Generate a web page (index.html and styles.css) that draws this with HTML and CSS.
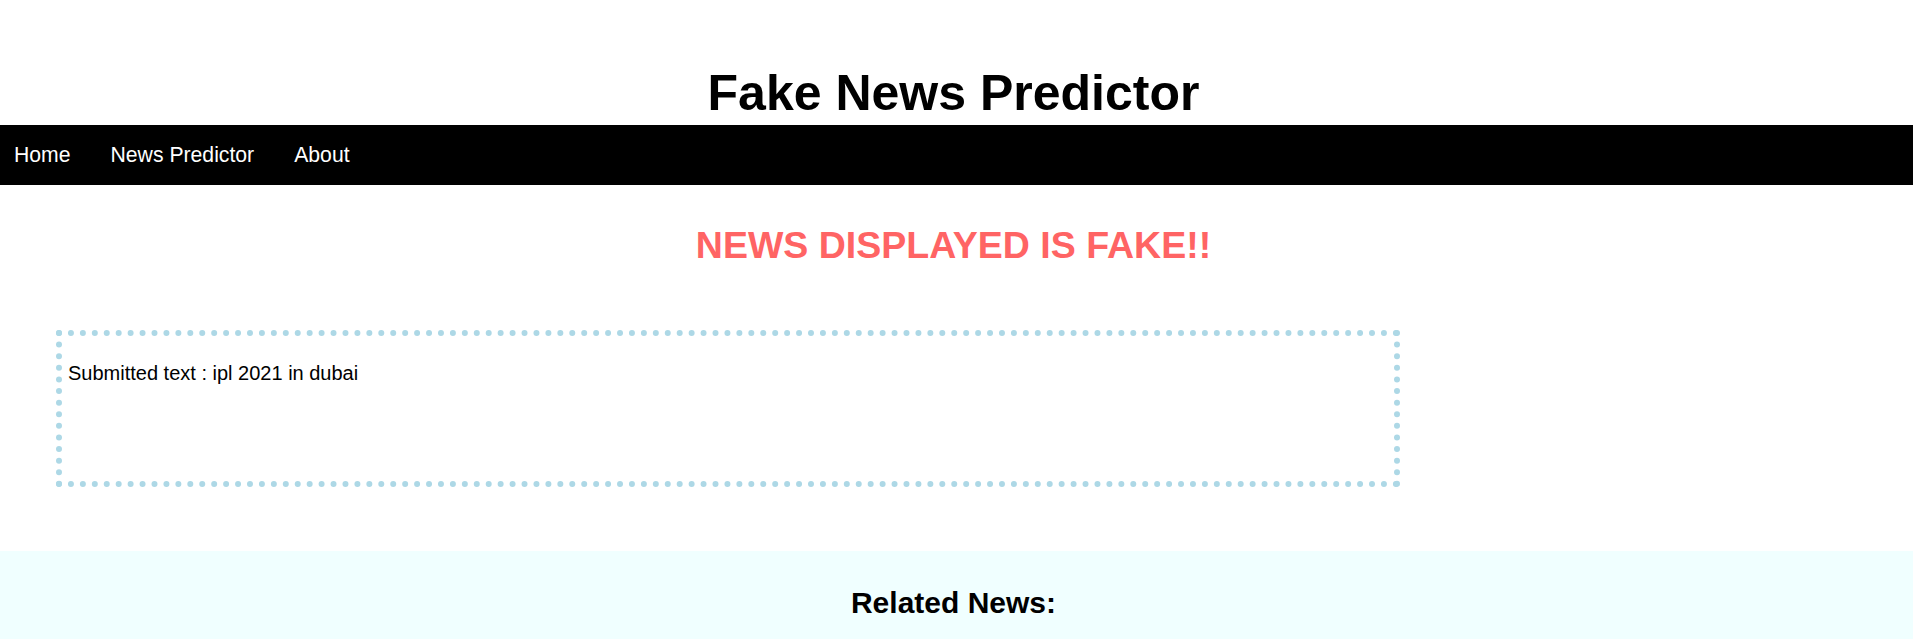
FILE: index.html
```html
<!DOCTYPE html>
<html>
<head>
<meta charset="utf-8">
<title>Fake News Predictor</title>
<link rel="stylesheet" href="styles.css">
</head>
<body>
<h1 class="site-title">Fake News Predictor</h1>
<nav class="topnav">
  <a href="#">Home</a>
  <a href="#">News Predictor</a>
  <a href="#">About</a>
</nav>
<h2 class="verdict">NEWS DISPLAYED IS FAKE!!</h2>
<div class="submitted">
  <p>Submitted text : ipl 2021 in dubai</p>
</div>
<section class="related">
  <h2>Related News:</h2>
</section>
</body>
</html>
```
FILE: styles.css
```css
html, body {
  margin: 0;
  padding: 0;
  background: #ffffff;
  font-family: "Liberation Sans", Arial, sans-serif;
  color: #000;
}

.site-title {
  margin: 64px 0 3px;
  padding-right: 6px;
  font-size: 50px;
  font-weight: bold;
  text-align: center;
  line-height: normal;
}

.topnav {
  height: 60px;
  background: #000;
  display: flex;
  align-items: center;
  gap: 40px;
  padding-left: 14px;
}

.topnav a {
  color: #fff;
  text-decoration: none;
  font-size: 21.2px;
}

.verdict {
  margin: 39px 0 0;
  padding-right: 6px;
  font-size: 37.5px;
  font-weight: bold;
  color: #ff6464;
  text-align: center;
  line-height: normal;
}

.submitted {
  box-sizing: border-box;
  margin: 63px 0 0 56px;
  width: 1344px;
  height: 157px;
  border: 6px dotted #add8e6;
  padding: 6px;
}

.submitted p {
  margin: 20px 0;
  font-size: 20px;
}

.related {
  margin-top: 64px;
  background: #f0ffff;
  padding: 35px 6px 40px 0;
  min-height: 200px;
}

.related h2 {
  margin: 0;
  font-size: 30px;
  font-weight: bold;
  text-align: center;
  line-height: normal;
}
```
